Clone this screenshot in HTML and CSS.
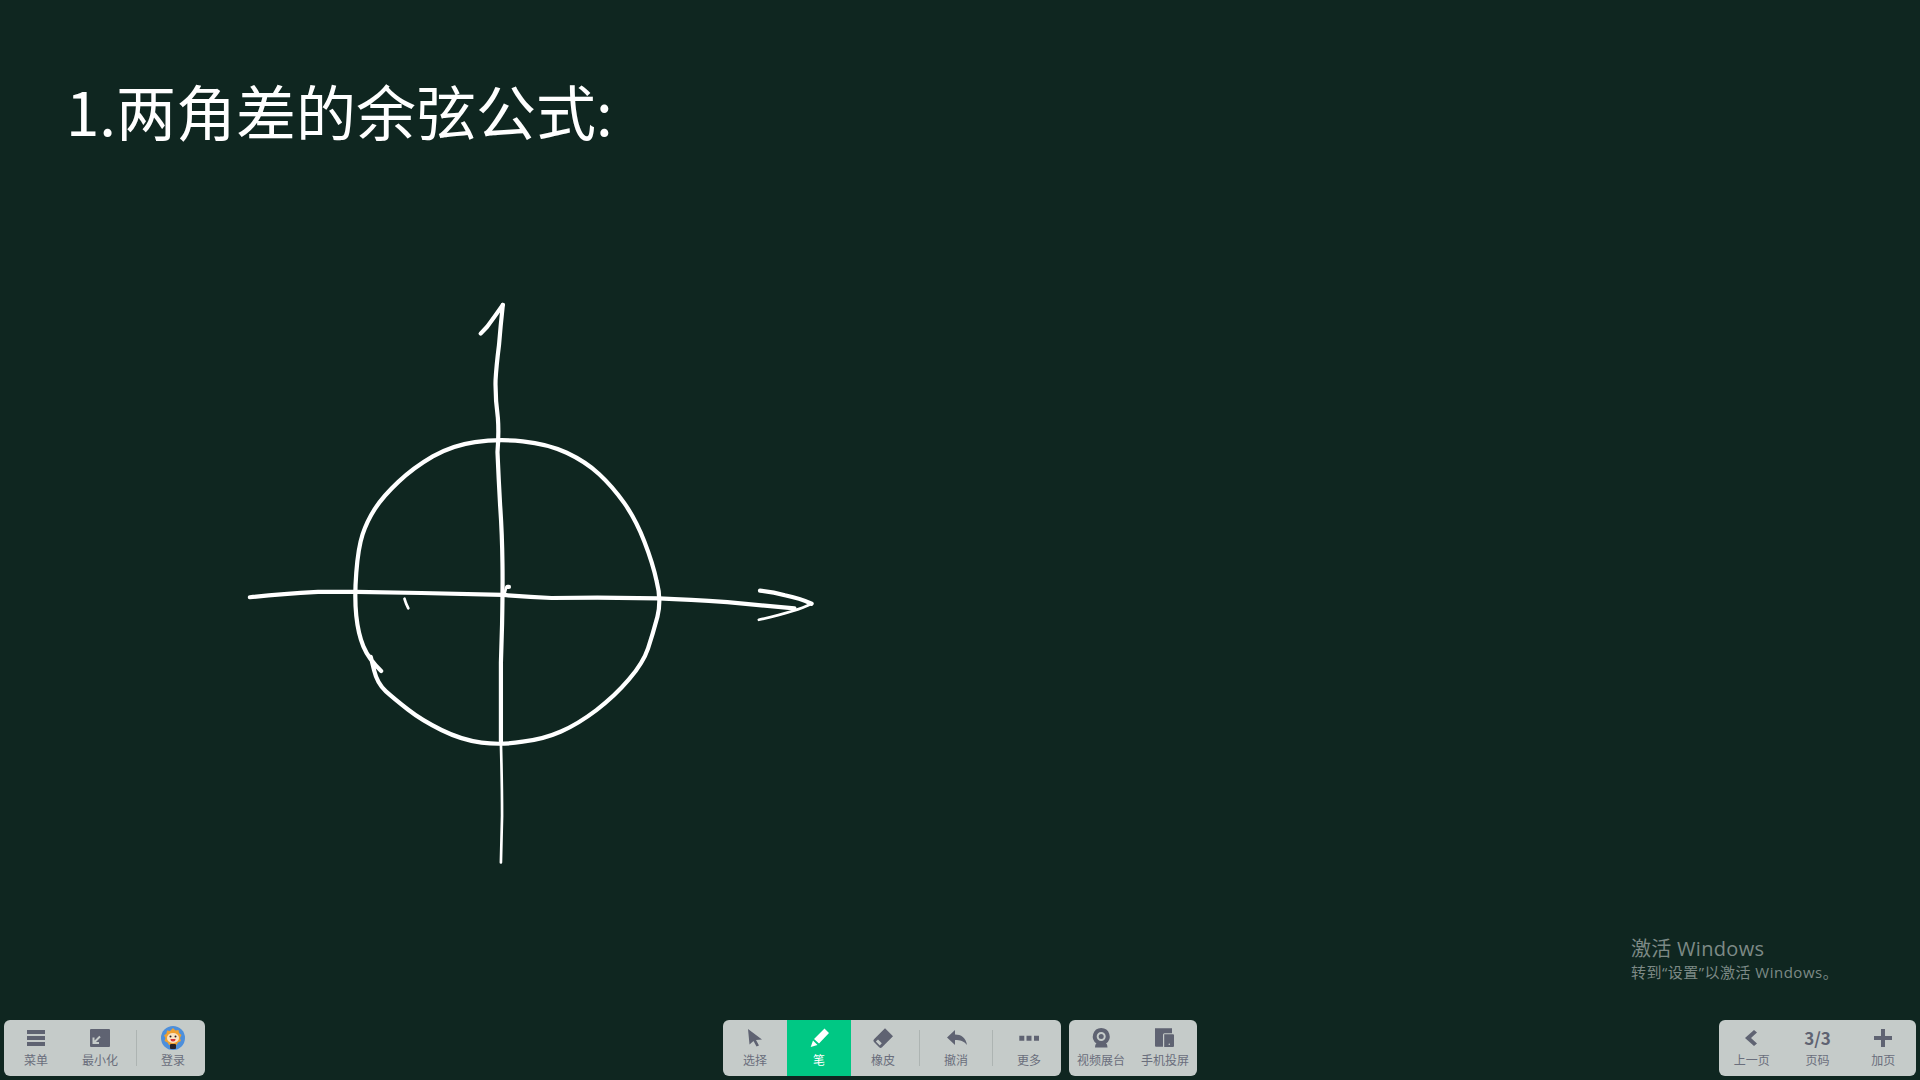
FILE: index.html
```html
<!DOCTYPE html>
<html lang="zh-CN">
<head>
<meta charset="utf-8">
<title>白板</title>
<link rel="stylesheet" href="styles.css">
</head>
<body>
<main class="board">
  <h1 class="heading">1.两角差的余弦公式:</h1>
  <svg class="sketch" viewBox="0 0 1568 1568" aria-label="坐标系与单位圆">
    <g class="ink">
      <path d="M655,140 L672,122 Q690,98 713,65"/>
      <path d="M713,65 Q707,120 703,170 Q696,225 694,262 Q693,310 700,360 Q703,400 699,450 Q702,520 706,590 Q711,660 712,740 Q713,800 711,900 L708,1000 L708,1210"/>
      <path class="thin" d="M708,1210 Q711,1320 711,1400 L708,1522"/>
      <path d="M52,829 Q130,821 230,815 L330,815 L500,818 L712,823 Q780,829 840,831 L960,830 L1120,832 Q1200,835 1300,842 Q1400,851 1475,858"/>
      <path d="M1385,812 Q1420,815 1450,824 Q1490,832 1520,846"/>
      <path class="thin" d="M1520,846 Q1480,866 1382,888"/>
      <path d="M395,1022 Q362,990 348.5,957.5 Q335,925 330,877.5 Q325,830 330,765 Q335,700 346.5,665 Q358,630 379,597.5 Q400,565 440,527.5 Q480,490 530,461 Q580,432 640,423.5 Q700,415 765,421.5 Q830,428 880,451.5 Q930,475 965,507.500 Q1000,540 1030,582.5 Q1060,625 1082.5,682.5 Q1105,740 1115,787.5 Q1128,835 1117,880 Q1105,925 1092.5,962.5 Q1080,1000 1042.5,1044 Q1005,1088 957.5,1124 Q910,1160 865,1180 Q820,1200 765,1206.5 Q710,1216 657.5,1209 Q605,1202 552.5,1176 Q500,1150 465,1122.5 Q430,1095 407.5,1075 Q385,1055 376.5,1020 L368,985"/>
      <path class="thin" d="M456,833 L460,845 L466,858"/>
      <path class="thin" d="M718,818 L722,803"/>
      <path d="M725,802 L729,802"/>
    </g>
  </svg>
  <div class="activation">
    <p class="activation-title">激活 Windows</p>
    <p class="activation-sub">转到“设置”以激活 Windows。</p>
  </div>
</main>

<footer class="toolbar">
  <div class="toolbar-group">
    <div class="panel">
      <button class="tool">
        <svg class="icon" viewBox="0 0 24 24"><path d="M3 4h18v4H3zM3 10h18v4H3zM3 16h18v4H3z"/></svg>
        <span>菜单</span>
      </button>
      <button class="tool">
        <svg class="icon" viewBox="0 0 24 24"><path d="M3 3h18a1 1 0 0 1 1 1v16a1 1 0 0 1-1 1H3a1 1 0 0 1-1-1V4a1 1 0 0 1 1-1z"/><path class="cut" d="M12 10.500 6 16.500M5.500 11.500v5.500h5.500"/></svg>
        <span>最小化</span>
      </button>
      <i class="divider"></i>
      <button class="tool">
        <svg class="icon" viewBox="0 0 24 24">
          <circle class="a-sky" cx="12" cy="12" r="12"/>
          <path class="a-mane" d="M12 2l2.500 2.500 3-.5.500 3 2.500 2-1.500 3 1 3-3 1.500-1.500 2.500H8l-1.500-2.500-3-1.500 1-3L3 9.500l2.500-2 .5-3 3 .5z"/>
          <ellipse class="a-face" cx="12" cy="12" rx="6" ry="5"/>
          <circle class="a-eye" cx="9.500" cy="10.500" r="1"/><circle class="a-eye" cx="14.500" cy="10.500" r="1"/>
          <path class="a-mouth" d="M9.500 13h5a2.500 2.500 0 0 1-5 0z"/>
          <rect class="a-eye" x="9" y="18" width="6" height="5" rx="1"/>
        </svg>
        <span>登录</span>
      </button>
    </div>
  </div>

  <div class="toolbar-group">
    <div class="panel">
      <button class="tool">
        <svg class="icon" viewBox="0 0 24 24"><path d="M5 3l14 10.500-6 .5 3 5.500-2.500 1-3-5.500-4 3.500z"/></svg>
        <span>选择</span>
      </button>
      <button class="tool active">
        <svg class="icon" viewBox="0 0 24 24"><path d="M17.500 2.500 22 7 12 17.500 7 13zM6 14.500l4.500 4.500-6.800 2z"/></svg>
        <span>笔</span>
      </button>
      <button class="tool">
        <svg class="icon" viewBox="0 0 24 24"><path fill-rule="evenodd" d="M14 2.300l8 8-11 11a2 2 0 0 1-2.800 0L3 16a2 2 0 0 1 0-2.800zM7 13.500 4.800 15.500l4 4 2-2.200z"/></svg>
        <span>橡皮</span>
      </button>
      <i class="divider"></i>
      <button class="tool">
        <svg class="icon" viewBox="0 0 24 24"><path d="M11 4v4.500c6 0 11 3 12 10.500-3-4-7-5-12-5v5L3 11.500z"/></svg>
        <span>撤消</span>
      </button>
      <i class="divider"></i>
      <button class="tool">
        <svg class="icon" viewBox="0 0 24 24"><path d="M2.300 9.700h5v5h-5zM9.500 9.700h5v5h-5zM17 9.700h5v5h-5z"/></svg>
        <span>更多</span>
      </button>
    </div>
    <div class="panel">
      <button class="tool">
        <svg class="icon" viewBox="0 0 24 24"><path fill-rule="evenodd" d="M12.200 2a8.500 8.500 0 0 1 4.800 15.500c1 .5 1.300 1.500 1.500 4H6c.2-2.500.5-3.500 1.500-4A8.500 8.500 0 0 1 12.200 2zM12.200 6a4.500 4.500 0 1 0 0 9 4.500 4.500 0 0 0 0-9z"/><circle cx="12.200" cy="10.500" r="2.500"/></svg>
        <span>视频展台</span>
      </button>
      <button class="tool">
        <svg class="icon" viewBox="0 0 24 24"><path fill-rule="evenodd" d="M2 2.300h17v5h-7.500a1.500 1.500 0 0 0-1.500 1.500v12H3a1 1 0 0 1-1-1zM11.200 8.300H20a1 1 0 0 1 1 1v10.700a1 1 0 0 1-1 1h-8.800zM16.300 17.500a.8.8 0 1 0 0 1.600.8.8 0 0 0 0-1.600z"/></svg>
        <span>手机投屏</span>
      </button>
    </div>
  </div>

  <div class="toolbar-group end">
    <div class="panel pager">
      <button class="tool">
        <svg class="icon" viewBox="0 0 24 24"><path d="M14 4l3 2.500-6 5.500 6 5.500-3 2.500-9-8z"/></svg>
        <span>上一页</span>
      </button>
      <button class="tool">
        <b class="page-count">3/3</b>
        <span>页码</span>
      </button>
      <button class="tool">
        <svg class="icon" viewBox="0 0 24 24"><path d="M10 3h4v7h7v4h-7v7h-4v-7H3v-4h7z"/></svg>
        <span>加页</span>
      </button>
    </div>
  </div>
</footer>
</body>
</html>
```
FILE: styles.css
```css
* { box-sizing: border-box; }
html, body { height: 100%; }
body {
  margin: 0;
  display: flex;
  flex-direction: column;
  background: #0f2620;
  font-family: "Noto Sans CJK SC", "Noto Sans", sans-serif;
  overflow: hidden;
}
.board { flex: 1; position: relative; }
.heading {
  position: absolute;
  left: 66px;
  top: 68px;
  margin: 0;
  font-size: 60px;
  line-height: 84px;
  font-weight: 400;
  color: #fff;
  white-space: nowrap;
}
.sketch { position: absolute; left: 230px; top: 280px; width: 600px; height: 600px; }
.ink path {
  fill: none;
  stroke: #fff;
  stroke-width: 11;
  stroke-linecap: round;
  stroke-linejoin: round;
}
.ink path.thin { stroke-width: 7; }
.activation { position: absolute; left: 1631px; top: 935px; color: #7d8a86; }
.activation p { margin: 0; white-space: nowrap; font-family: "Open Sans", "Noto Sans CJK SC", sans-serif; }
.activation-title { font-size: 20px; line-height: 27px; letter-spacing: .3px; }
.activation-sub { font-size: 15px; line-height: 20px; letter-spacing: .5px; }

.toolbar {
  display: grid;
  grid-template-columns: 1fr auto 1fr;
  padding: 0 4px 4px;
}
.toolbar-group { display: flex; gap: 8px; }
.toolbar-group.end { justify-content: flex-end; }
.panel {
  display: flex;
  align-items: center;
  height: 56px;
  background: #c5cbc9;
  border-radius: 6px;
  overflow: hidden;
}
.pager { width: 197px; }
.pager .tool { flex: 1; }
.tool {
  width: 64px;
  height: 56px;
  padding: 6px 0 0;
  border: 0;
  background: none;
  display: flex;
  flex-direction: column;
  align-items: center;
  gap: 1px;
  color: #6a6e7c;
  font: inherit;
}
.tool span { font-size: 12px; line-height: 18px; white-space: nowrap; }
.tool.active { background: #00c884; color: #fff; }
.icon { width: 24px; height: 24px; fill: #5f6372; display: block; }
.active .icon { fill: #fff; }
.cut { fill: none; stroke: #c5cbc9; stroke-width: 2; }
.divider { width: 1px; height: 36px; margin: 0 4px; background: #adb4b2; flex: none; }
.page-count { height: 24px; font-size: 17px; line-height: 24px; color: #5f6372; font-weight: 700; }
.a-sky { fill: #4d8fdb; }
.a-mane { fill: #f0a030; }
.a-face { fill: #fbe3c4; }
.a-eye { fill: #2a2226; }
.a-mouth { fill: #d8343a; }
```
